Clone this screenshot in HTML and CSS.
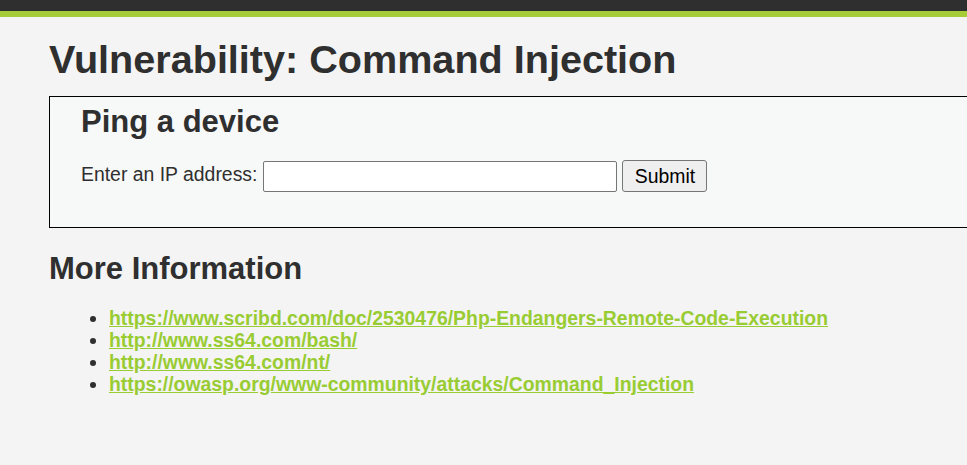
FILE: index.html
```html
<!DOCTYPE html>
<html>
<head>
<meta charset="utf-8">
<link rel="stylesheet" href="styles.css">
</head>
<body>
<div class="topbar"></div>
<div class="main">
  <h1 class="title">Vulnerability: Command Injection</h1>
  <div class="vuln-box">
    <h2 class="box-title">Ping a device</h2>
    <form class="ping-form">
      <label class="ip-label">Enter an IP address:</label>
      <input class="ip-input" type="text">
      <button class="submit-btn" type="button">Submit</button>
    </form>
  </div>
  <h2 class="info-title">More Information</h2>
  <ul class="links">
    <li><a href="#">https://www.scribd.com/doc/2530476/Php-Endangers-Remote-Code-Execution</a></li>
    <li><a href="#">http://www.ss64.com/bash/</a></li>
    <li><a href="#">http://www.ss64.com/nt/</a></li>
    <li><a href="#">https://owasp.org/www-community/attacks/Command_Injection</a></li>
  </ul>
</div>
</body>
</html>
```
FILE: styles.css
```css
html, body {
  margin: 0;
  padding: 0;
  overflow: hidden;
  background: #f4f4f4;
}
body {
  font-family: "Liberation Sans", Arial, sans-serif;
  color: #2f2f2f;
}
.topbar {
  height: 11px;
  background: #2f2f2f;
  border-bottom: 6px solid #a6cd38;
}
.main {
  padding-left: 49px;
}
.title {
  margin: 0;
  padding-top: 20px;
  font-size: 39.6px;
  line-height: 44px;
  font-weight: bold;
}
.vuln-box {
  margin-top: 15px;
  height: 130px;
  border: 1px solid #000;
  border-right: none;
  background: #f7f8f8;
  padding-left: 31px;
}
.box-title {
  margin: 0;
  padding-top: 7px;
  font-size: 31px;
  line-height: 36px;
}
.ping-form {
  margin-top: 20px;
  display: flex;
  align-items: center;
  font-size: 19.4px;
}
.ip-label {
  margin-right: 6px;
  margin-bottom: 4px;
}
.ip-input {
  width: 354px;
  height: 31px;
  box-sizing: border-box;
  border: 1px solid #767676;
  border-radius: 2px;
  background: #fff;
  margin: 0 5px 0 0;
}
.submit-btn {
  height: 32px;
  width: 85px;
  font-family: "Liberation Sans", Arial, sans-serif;
  font-size: 19.4px;
  color: #000;
  background: #efefef;
  border: 1px solid #767676;
  border-radius: 3px;
  padding: 0;
}
.info-title {
  margin: 0;
  padding-top: 23px;
  font-size: 31px;
  line-height: 36px;
}
.links {
  margin: 20px 0 0 0;
  padding-left: 60px;
  font-size: 19.4px;
  line-height: 22px;
}
.links a {
  color: #99cc33;
  font-weight: bold;
}
```
